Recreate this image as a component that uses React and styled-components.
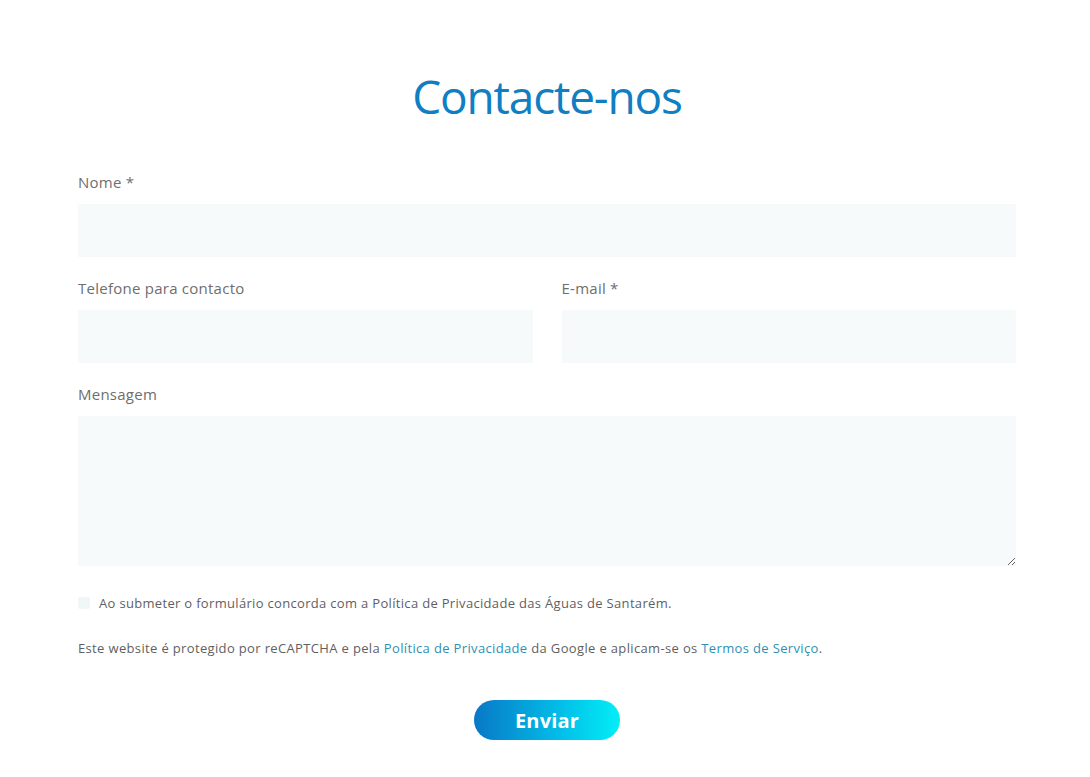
import styled, { createGlobalStyle } from "styled-components";

const GlobalStyle = createGlobalStyle`
  body {
    margin: 0;
    background: #ffffff;
    font-family: "Open Sans", "Noto Sans", sans-serif;
  }
`;

const Section = styled.section`
  width: 938px;
  margin: 0 0 0 calc(50% - 467px);
  padding: 68px 0 36px;
  box-sizing: border-box;
`;

const Title = styled.h1`
  margin: 0 0 47px;
  font-family: "Open Sans", "Noto Sans", sans-serif;
  font-weight: 400;
  font-size: 46px;
  line-height: 56px;
  letter-spacing: -1.2px;
  text-align: center;
  color: #0f7ec2;
`;

const Form = styled.form`
  display: flex;
  flex-direction: column;
`;

const Row = styled.div`
  display: grid;
  grid-template-columns: ${(p) => (p.$split ? "1fr 1fr" : "1fr")};
  column-gap: 29px;
  margin-bottom: 20px;
`;

const Field = styled.label`
  display: flex;
  flex-direction: column;
`;

const LabelText = styled.span`
  font-size: 15px;
  line-height: 22px;
  letter-spacing: 0.25px;
  color: #6e6e6e;
  margin-bottom: 11px;
`;

const Input = styled.input`
  height: 53px;
  border: none;
  outline: none;
  background: #f6fafb;
  padding: 0 16px;
  font: inherit;
  box-sizing: border-box;
`;

const TextArea = styled.textarea`
  height: 150px;
  border: none;
  outline: none;
  background: #f6fafb;
  padding: 14px 16px;
  font: inherit;
  box-sizing: border-box;
  resize: vertical;
`;

const Consent = styled.label`
  display: flex;
  align-items: center;
  gap: 9px;
  margin-top: 7px;
  font-size: 13px;
  line-height: 20px;
  letter-spacing: 0.32px;
  color: #5f5f5f;
`;

const Box = styled.input`
  appearance: none;
  width: 12px;
  height: 12px;
  margin: 0;
  border-radius: 2px;
  background: #f1f6f7;
`;

const Notice = styled.p`
  margin: 25px 0 0;
  font-size: 13px;
  line-height: 20px;
  letter-spacing: 0.35px;
  color: #5f5f5f;
`;

const Link = styled.a`
  color: #2f8fb3;
  text-decoration: none;
`;

const Submit = styled.button`
  align-self: center;
  margin-top: 42px;
  width: 146px;
  height: 40px;
  border: none;
  border-radius: 20px;
  background: linear-gradient(90deg, #0878c6 0%, #03b9e6 55%, #02eef6 100%);
  color: #ffffff;
  font-family: "Open Sans", "Noto Sans", sans-serif;
  font-weight: 700;
  font-size: 20px;
  letter-spacing: 0.2px;
  cursor: pointer;
`;

export default function App() {
  return (
    <>
      <GlobalStyle />
      <Section>
        <Title>Contacte-nos</Title>
        <Form onSubmit={(e) => e.preventDefault()}>
          <Row>
            <Field>
              <LabelText>Nome *</LabelText>
              <Input type="text" />
            </Field>
          </Row>
          <Row $split>
            <Field>
              <LabelText>Telefone para contacto</LabelText>
              <Input type="tel" />
            </Field>
            <Field>
              <LabelText>E-mail *</LabelText>
              <Input type="email" />
            </Field>
          </Row>
          <Row>
            <Field>
              <LabelText>Mensagem</LabelText>
              <TextArea />
            </Field>
          </Row>
          <Consent>
            <Box type="checkbox" />
            Ao submeter o formulário concorda com a Política de Privacidade das Águas de Santarém.
          </Consent>
          <Notice>
            Este website é protegido por reCAPTCHA e pela{" "}
            <Link href="#">Política de Privacidade</Link> da Google e aplicam-se os{" "}
            <Link href="#">Termos de Serviço</Link>.
          </Notice>
          <Submit type="submit">Enviar</Submit>
        </Form>
      </Section>
    </>
  );
}
